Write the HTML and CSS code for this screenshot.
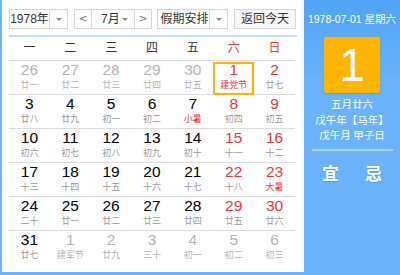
FILE: index.html
```html
<!DOCTYPE html>
<html lang="zh-CN">
<head>
<meta charset="utf-8">
<title>万年历</title>
<link rel="stylesheet" href="styles.css">
</head>
<body>
<div class="cal">
  <div class="main">
    <div class="toolbar">
      <div class="sel sel-year"><span class="sel-text">1978年</span><span class="sel-arrow"><i class="tri"></i></span></div>
      <div class="sel sel-month">
        <span class="nav">&lt;</span>
        <span class="sel-mid"><span class="m-text">7月</span><i class="tri"></i></span>
        <span class="nav nav-r">&gt;</span>
      </div>
      <div class="sel sel-hol"><span class="sel-text">假期安排</span><span class="sel-arrow"><i class="tri"></i></span></div>
      <div class="btn">返回今天</div>
    </div>
    <div class="grid">
      <div class="wk">一</div><div class="wk">二</div><div class="wk">三</div><div class="wk">四</div><div class="wk">五</div><div class="wk we">六</div><div class="wk we">日</div>

      <div class="d other"><b>26</b><s>廿一</s></div>
      <div class="d other"><b>27</b><s>廿二</s></div>
      <div class="d other"><b>28</b><s>廿三</s></div>
      <div class="d other"><b>29</b><s>廿四</s></div>
      <div class="d other"><b>30</b><s>廿五</s></div>
      <div class="d we sel-day"><b>1</b><s class="fest">建党节</s></div>
      <div class="d we"><b>2</b><s>廿七</s></div>

      <div class="d"><b>3</b><s>廿八</s></div>
      <div class="d"><b>4</b><s>廿九</s></div>
      <div class="d"><b>5</b><s>初一</s></div>
      <div class="d"><b>6</b><s>初二</s></div>
      <div class="d"><b>7</b><s class="fest">小暑</s></div>
      <div class="d we"><b>8</b><s>初四</s></div>
      <div class="d we"><b>9</b><s>初五</s></div>

      <div class="d"><b>10</b><s>初六</s></div>
      <div class="d"><b>11</b><s>初七</s></div>
      <div class="d"><b>12</b><s>初八</s></div>
      <div class="d"><b>13</b><s>初九</s></div>
      <div class="d"><b>14</b><s>初十</s></div>
      <div class="d we"><b>15</b><s>十一</s></div>
      <div class="d we"><b>16</b><s>十二</s></div>

      <div class="d"><b>17</b><s>十三</s></div>
      <div class="d"><b>18</b><s>十四</s></div>
      <div class="d"><b>19</b><s>十五</s></div>
      <div class="d"><b>20</b><s>十六</s></div>
      <div class="d"><b>21</b><s>十七</s></div>
      <div class="d we"><b>22</b><s>十八</s></div>
      <div class="d we"><b>23</b><s class="fest">大暑</s></div>

      <div class="d"><b>24</b><s>二十</s></div>
      <div class="d"><b>25</b><s>廿一</s></div>
      <div class="d"><b>26</b><s>廿二</s></div>
      <div class="d"><b>27</b><s>廿三</s></div>
      <div class="d"><b>28</b><s>廿四</s></div>
      <div class="d we"><b>29</b><s>廿五</s></div>
      <div class="d we"><b>30</b><s>廿六</s></div>

      <div class="d last"><b>31</b><s>廿七</s></div>
      <div class="d last other"><b>1</b><s>建军节</s></div>
      <div class="d last other"><b>2</b><s>廿九</s></div>
      <div class="d last other"><b>3</b><s>三十</s></div>
      <div class="d last other"><b>4</b><s>初一</s></div>
      <div class="d last other"><b>5</b><s>初二</s></div>
      <div class="d last other"><b>6</b><s>初三</s></div>
    </div>
  </div>
  <div class="side">
    <div class="side-head">1978-07-01 星期六</div>
    <div class="big">1</div>
    <div class="lunar first">五月廿六</div>
    <div class="lunar">戊午年【马年】</div>
    <div class="lunar">戊午月 甲子日</div>
    <div class="side-line"></div>
    <div class="yiji"><span>宜</span><span>忌</span></div>
  </div>
</div>
</body>
</html>
```
FILE: styles.css
```css
html, body {
  margin: 0;
  padding: 0;
  background: #fff;
}
body {
  font-family: "Liberation Sans", Arial, "Noto Sans CJK SC", sans-serif;
  font-size: 12px;
  color: #333;
}
.cal {
  display: flex;
  width: 400px;
  height: 275px;
  background: #6ab2f9;
  overflow: hidden;
}
.main {
  width: 302px;
  height: 272px;
  margin-left: 2px;
  background: #fff;
  box-sizing: border-box;
  padding: 9px 7px 0 7px;
}
.toolbar {
  display: flex;
  height: 20px;
  padding-bottom: 6px;
  border-bottom: 2px solid #c4ddf8;
}
.sel {
  display: flex;
  height: 20px;
  box-sizing: border-box;
  border: 1px solid #d6d6d6;
  background: #fff;
  line-height: 18px;
  color: #333;
}
.sel-year { width: 59px; }
.sel-text { flex: 1; text-align: center; }
.sel-arrow {
  width: 17px;
  border-left: 1px solid #d6d6d6;
  display: flex;
  align-items: center;
  justify-content: center;
}
.tri {
  display: block;
  width: 0;
  height: 0;
  border-left: 3px solid transparent;
  border-right: 3px solid transparent;
  border-top: 3px solid #888;
}
.sel-month { width: 78px; margin-left: 6px; }
.nav {
  width: 16px;
  text-align: center;
  color: #777;
  border-right: 1px solid #d6d6d6;
  font-family: "DejaVu Sans", sans-serif;
  font-size: 11px;
}
.nav-r { border-right: 0; border-left: 1px solid #d6d6d6; }
.sel-mid {
  flex: 1;
  display: flex;
  align-items: center;
  padding-left: 9px;
}
.sel-mid .m-text { flex: 1; }
.sel-mid .tri { margin-right: 6px; }
.sel-hol { width: 71px; margin-left: 5px; }
.sel-hol .sel-text { padding-left: 2px; }
.btn {
  margin-left: 6px;
  width: 62px;
  height: 20px;
  box-sizing: border-box;
  border: 1px solid #d6d6d6;
  background: #f7f7f7;
  text-align: center;
  line-height: 18px;
  color: #333;
}
.grid {
  display: grid;
  grid-template-columns: repeat(7, 1fr);
  width: 286px;
}
.wk {
  height: 23px;
  line-height: 23px;
  text-align: center;
  font-size: 12px;
  color: #333;
  border-bottom: 1px solid #dcdcdc;
}
.wk.we { color: #e8363b; }
.d {
  height: 34px;
  box-sizing: border-box;
  border-bottom: 1px solid #dcdcdc;
  text-align: center;
  display: flex;
  flex-direction: column;
  align-items: center;
}
.d.last { border-bottom: 0; }
.d b {
  font-weight: normal;
  font-size: 15.5px;
  line-height: 18px;
  color: #000;
}
.d s {
  text-decoration: none;
  font-size: 9px;
  line-height: 12px;
  color: #999;
  font-family: "Noto Sans CJK SC", sans-serif;
}
.d.we b { color: #e8363b; }
.d s.fest { color: #e8363b; }
.d.other b { color: #b4b4b4; }
.d.other s { color: #b4b4b4; }
.d.sel-day {
  border: 2px solid #ffb400;
  margin-top: 1px;
  height: 33px;
}
.d.sel-day b { margin-top: -3px; }
.side {
  flex: 1;
  display: flex;
  flex-direction: column;
  align-items: center;
  color: #fff;
  background: linear-gradient(#4fa2f5 0, #5aa9f7 30px, #6ab2f9 80px);
}
.side-head {
  height: 37px;
  line-height: 38px;
  font-size: 10.5px;
  white-space: nowrap;
}
.big {
  width: 56px;
  height: 56px;
  background: #ffb400;
  border-radius: 2px;
  box-shadow: 0 1px 2px rgba(0,0,0,0.15);
  text-align: center;
  line-height: 56px;
  font-size: 46px;
  color: #fff;
}
.lunar {
  font-size: 10.5px;
  line-height: 15.5px;
  white-space: nowrap;
  font-family: "Noto Sans CJK SC", sans-serif;
}
.lunar.first { margin-top: 3px; }
.side-line {
  width: 81px;
  height: 2px;
  background: #a8d2fb;
  margin-top: 6px;
}
.yiji {
  display: flex;
  width: 60px;
  justify-content: space-between;
  margin-top: 9px;
  font-size: 17px;
  font-weight: bold;
  font-family: "Noto Sans CJK SC", sans-serif;
  text-shadow: 0 1px 1px rgba(0,0,0,0.15);
}
```
